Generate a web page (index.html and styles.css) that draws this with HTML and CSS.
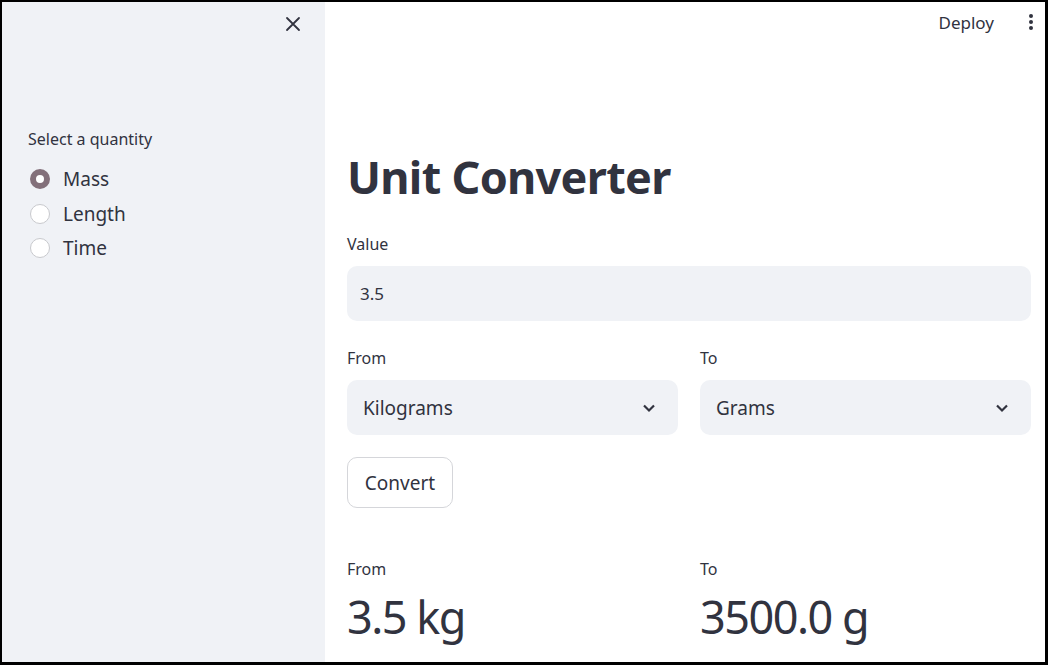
FILE: index.html
```html
<!DOCTYPE html>
<html lang="en">
<head>
    <meta charset="UTF-8">
    <title>Unit Converter</title>
    <link rel="stylesheet" href="styles.css">
</head>
<body>
    <div id="frame">
        <div id="sidebar">
            <div class="side-top">
                <svg class="close" width="16" height="16" viewBox="0 0 16 16">
                    <path d="M2 2L14 14M14 2L2 14" stroke="#31333f" stroke-width="1.8" stroke-linecap="round"/>
                </svg>
            </div>
            <div class="side-label">Select a quantity</div>
            <ul class="radios">
                <li class="checked"><span class="dot"></span>Mass</li>
                <li><span class="dot"></span>Length</li>
                <li><span class="dot"></span>Time</li>
            </ul>
        </div>
        <div id="main">
            <div class="topbar">
                <span class="deploy">Deploy</span>
                <svg class="kebab" width="6" height="18" viewBox="0 0 6 18">
                    <circle cx="3" cy="3" r="2" fill="#31333f"/>
                    <circle cx="3" cy="9" r="2" fill="#31333f"/>
                    <circle cx="3" cy="15" r="2" fill="#31333f"/>
                </svg>
            </div>
            <div class="content">
                <h1>Unit Converter</h1>
                <div class="label">Value</div>
                <div class="input">3.5</div>
                <div class="cols">
                    <div class="col">
                        <div class="label">From</div>
                        <div class="select">Kilograms
                            <svg width="14" height="10" viewBox="0 0 14 10"><path d="M2 2.5L7 7.5L12 2.5" fill="none" stroke="#31333f" stroke-width="2.2"/></svg>
                        </div>
                    </div>
                    <div class="col">
                        <div class="label">To</div>
                        <div class="select">Grams
                            <svg width="14" height="10" viewBox="0 0 14 10"><path d="M2 2.5L7 7.5L12 2.5" fill="none" stroke="#31333f" stroke-width="2.2"/></svg>
                        </div>
                    </div>
                </div>
                <button class="btn">Convert</button>
                <div class="cols metrics">
                    <div class="col">
                        <div class="label">From</div>
                        <div class="metric">3.5 kg</div>
                    </div>
                    <div class="col">
                        <div class="label">To</div>
                        <div class="metric">3500.0 g</div>
                    </div>
                </div>
            </div>
        </div>
    </div>
</body>
</html>
```

FILE: styles.css
```css
*{
    margin: 0;
    padding: 0;
    box-sizing: border-box;
}
ul{
    list-style: none;
}
body{
    font-family: "Noto Sans", sans-serif;
    color: #31333f;
    background: #fff;
}
#frame{
    width: 1048px;
    height: 665px;
    border-style: solid;
    border-color: #000;
    border-width: 2px 3px 3px 2px;
    display: flex;
    overflow: hidden;
}
#sidebar{
    width: 323px;
    background: #f0f2f6;
    padding-left: 26px;
}
.side-top{
    display: flex;
    justify-content: flex-end;
    padding: 14px 24px 0 0;
    height: 127px;
}
.side-label{
    font-size: 16px;
    line-height: 20px;
}
.radios{
    margin-top: 13px;
}
.radios li{
    display: flex;
    align-items: center;
    height: 34.5px;
    font-size: 19px;
    padding-left: 2px;
}
.dot{
    width: 20px;
    height: 20px;
    border-radius: 50%;
    border: 1px solid #c8c9cd;
    background: #fff;
    margin-right: 13px;
}
.radios .checked .dot{
    border: 6.5px solid #83707a;
}
#main{
    flex: 1;
}
.topbar{
    height: 40px;
    display: flex;
    justify-content: flex-end;
    align-items: center;
    padding-right: 11px;
}
.deploy{
    font-size: 17px;
    margin-right: 34px;
}
.content{
    padding: 105px 14px 0 22px;
}
h1{
    font-size: 45px;
    font-weight: 700;
    line-height: 60px;
    letter-spacing: -0.7px;
}
.label{
    font-size: 16px;
    line-height: 20px;
    margin-top: 27px;
    margin-bottom: 12px;
}
.input,.select{
    height: 55px;
    border-radius: 10px;
    background: #f0f2f6;
    display: flex;
    align-items: center;
}
.input{
    font-size: 17px;
    padding-left: 13px;
}
.select{
    font-size: 19px;
    padding: 0 22px 0 16px;
    justify-content: space-between;
}
.cols{
    display: flex;
    gap: 22px;
}
.col{
    flex: 1;
}
.btn{
    margin-top: 22px;
    width: 106px;
    height: 51px;
    font-family: inherit;
    font-size: 19px;
    color: #31333f;
    background: #fff;
    border: 1px solid #d5d6da;
    border-radius: 10px;
}
.metrics{
    margin-top: 24px;
}
.metrics .label{
    margin-bottom: 8px;
}
.metric{
    font-size: 45px;
    line-height: 60px;
    letter-spacing: -1.5px;
}
```
